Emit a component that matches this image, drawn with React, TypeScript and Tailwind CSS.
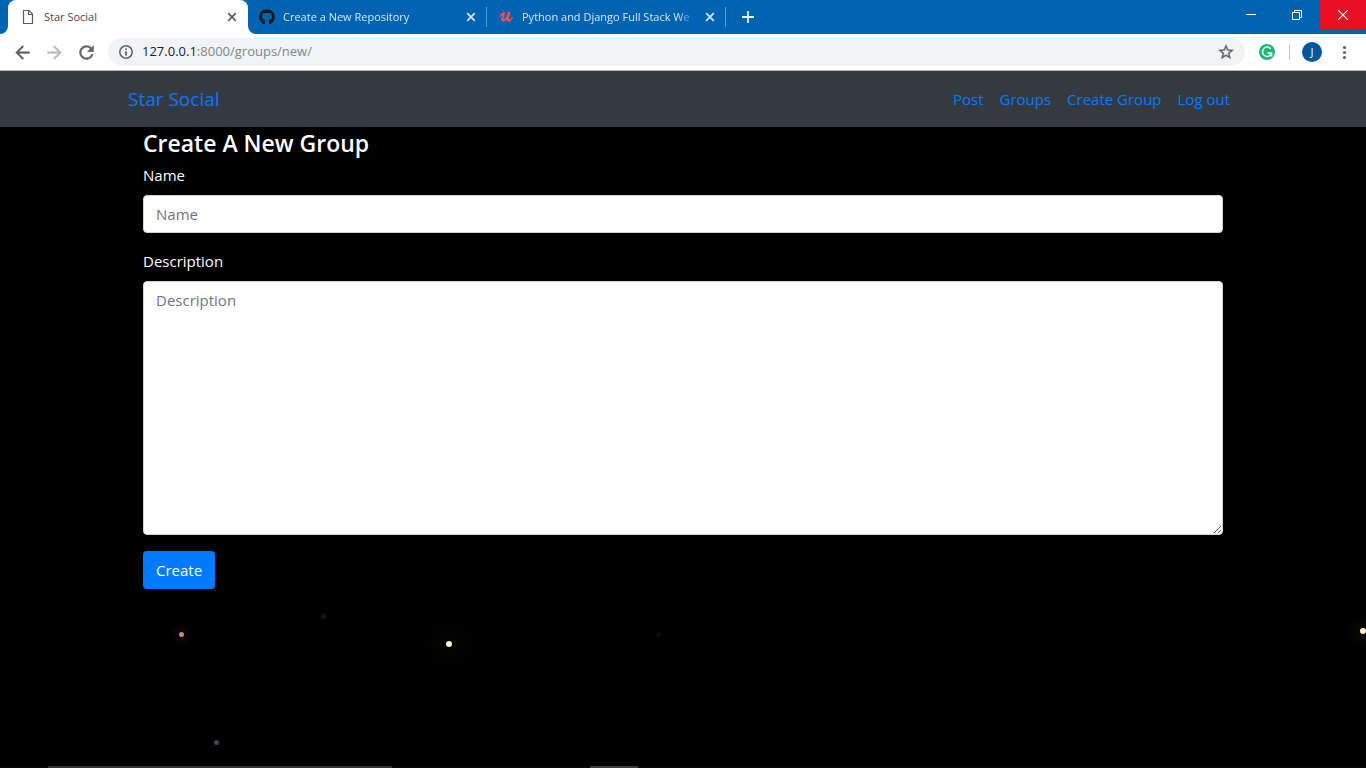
import type { ReactNode } from "react";
import { FaGithub } from "react-icons/fa";

function CloseGlyph() {
  return (
    <svg viewBox="0 0 10 10" className="size-[10px]" fill="none" stroke="currentColor" strokeWidth="1.7">
      <path d="M1.200 1.200 8.800 8.800M8.800 1.200 1.200 8.800" />
    </svg>
  );
}

function ToolbarGlyph({ d }: { d: string }) {
  return (
    <svg viewBox="0 0 24 24" className="size-[21px]" fill="currentColor" stroke="currentColor" strokeWidth="0.5">
      <path d={d} />
    </svg>
  );
}

const glyphs = {
  back: "M20 11H7.830l5.590-5.590L12 4l-8 8 8 8 1.410-1.410L7.830 13H20v-2z",
  forward: "M12 4l-1.410 1.410L16.170 11H4v2h12.170l-5.580 5.590L12 20l8-8z",
  reload:
    "M17.650 6.350A7.958 7.958 0 0 0 12 4c-4.420 0-7.990 3.580-7.990 8s3.570 8 7.990 8c3.730 0 6.840-2.550 7.730-6h-2.080A5.990 5.990 0 0 1 12 18c-3.310 0-6-2.690-6-6s2.690-6 6-6c1.660 0 3.140.690 4.220 1.780L13 11h7V4l-2.350 2.350z",
};

function InfoGlyph() {
  return (
    <svg viewBox="0 0 16 16" className="size-4" fill="none" stroke="currentColor">
      <circle cx="8" cy="8" r="6.200" strokeWidth="1.500" />
      <path strokeWidth="1.800" d="M8 7.200V11.500M8 4.400V6" />
    </svg>
  );
}

function StarGlyph() {
  return (
    <svg viewBox="0 0 24 24" className="size-[18px]" fill="currentColor" stroke="currentColor" strokeWidth="0.500">
      <path d="M22 9.240l-7.190-.620L12 2 9.190 8.630 2 9.240l5.460 4.730L5.820 21 12 17.270 18.180 21l-1.630-7.030L22 9.240zM12 15.400l-3.760 2.270 1-4.280-3.320-2.880 4.380-.380L12 6.100l1.710 4.040 4.380.380-3.320 2.880 1 4.280L12 15.400z" />
    </svg>
  );
}

function MenuGlyph() {
  return (
    <svg viewBox="0 0 20 20" className="size-5" fill="currentColor">
      <circle cx="10.500" cy="5.500" r="1.600" />
      <circle cx="10.500" cy="10.500" r="1.600" />
      <circle cx="10.500" cy="15.500" r="1.600" />
    </svg>
  );
}

function UdemyMark() {
  return (
    <svg viewBox="0 0 16 16" className="size-4 shrink-0" fill="none" stroke="#eb5252" strokeLinecap="round" strokeLinejoin="round">
      <path strokeWidth="2.300" d="M6 4 4.600 8.800C3.800 12 6 12.400 7.600 10.400 9 8.600 10.200 6.400 11.200 3.800M11.200 3.800 9.900 8.600C9.200 11.600 10.600 12.400 12 11" />
      <path strokeWidth="1.300" d="M1.800 7.200C2.800 5.400 4.200 4 6 4M12 11 14.300 8.800" />
    </svg>
  );
}

function FileGlyph() {
  return (
    <svg viewBox="0 0 16 16" className="size-4 shrink-0" fill="none" stroke="#5a5d61" strokeWidth="1.200">
      <path d="M3.500 1.500H9L12.500 5V14.500H3.500ZM8.500 1.500V5.500H12.500" />
    </svg>
  );
}

function GrammarlyMark() {
  return (
    <svg viewBox="0 0 16 16" className="size-4" fill="none">
      <circle cx="8" cy="8" r="8" fill="#1cb775" />
      <path d="M11.800 4.800A4.700 4.700 0 1 0 12.200 10.200" stroke="#fff" strokeWidth="1.500" />
      <path d="M8.400 9H12.600V12.600" stroke="#fff" strokeWidth="1.500" />
    </svg>
  );
}

function InactiveTab({ icon, title }: { icon: ReactNode; title: string }) {
  return (
    <div className="relative flex h-[34px] min-w-0 flex-[0_1_239px] items-center gap-2 px-[11px] text-[#d9e8f5]">
      {icon}
      <a
        href="#"
        className="min-w-0 flex-1 overflow-hidden whitespace-nowrap [mask-image:linear-gradient(to_right,black_88%,transparent)]"
      >
        {title}
      </a>
      <button aria-label="Close tab">
        <CloseGlyph />
      </button>
      <span className="absolute right-0 top-[7px] h-5 w-px bg-[#5c9bd0]" />
    </div>
  );
}

function BrowserChrome() {
  return (
    <header>
      <div className="flex h-[34px] items-start bg-[#0063b1] text-[11px]">
        <span className="h-full w-2 bg-white">
          <span className="block h-full rounded-br-lg bg-[#0063b1]" />
        </span>
        <div className="flex h-[34px] min-w-0 flex-[0_1_240px] items-center gap-2 rounded-t-lg bg-white pl-3 pr-[11px] text-[#45494d]">
          <FileGlyph />
          <a href="#" className="min-w-0 flex-1 truncate">
            Star Social
          </a>
          <button aria-label="Close tab" className="text-[#5a5d61]">
            <CloseGlyph />
          </button>
        </div>
        <span className="h-full bg-white">
          <span className="block h-full w-2 rounded-bl-lg bg-[#0063b1]" />
        </span>
        <div className="-ml-2 flex min-w-0 flex-1">
          <InactiveTab icon={<FaGithub className="size-4 shrink-0 text-[#191717]" />} title="Create a New Repository" />
          <InactiveTab icon={<UdemyMark />} title="Python and Django Full Stack We" />
          <button aria-label="New tab" className="ml-4 text-[#e6f0f8]">
            <svg viewBox="0 0 12 12" className="size-3" fill="none" stroke="currentColor" strokeWidth="1.800">
              <path d="M6 0V12M0 6H12" />
            </svg>
          </button>
        </div>
        <div className="flex h-[29px] text-white">
          <button aria-label="Minimize" className="flex w-[46px] items-center justify-center">
            <svg viewBox="0 0 10 10" className="size-[10px]" stroke="currentColor">
              <path d="M0 4.500H10" />
            </svg>
          </button>
          <button aria-label="Restore" className="flex w-[46px] items-center justify-center">
            <svg viewBox="0 0 10 10" className="size-[10px]" fill="none" stroke="currentColor">
              <path d="M.5 2.500H7.500V9.500H.5ZM2.500 2.500V.5H9.500V7.500H7.500" />
            </svg>
          </button>
          <button aria-label="Close" className="flex w-[46px] items-center justify-center bg-[#e81123]">
            <svg viewBox="0 0 10 10" className="size-[10px]" stroke="currentColor" strokeWidth="1.100">
              <path d="M0 0 10 10M10 0 0 10" />
            </svg>
          </button>
        </div>
      </div>
      <div className="flex h-[37px] items-center border-b border-[#b6b4b6] bg-white px-3 text-[#5f6368]">
        <button aria-label="Back" className="mr-[11px]">
          <ToolbarGlyph d={glyphs.back} />
        </button>
        <button aria-label="Forward" className="mr-[11px] text-[#babcbe]">
          <ToolbarGlyph d={glyphs.forward} />
        </button>
        <button aria-label="Reload">
          <ToolbarGlyph d={glyphs.reload} />
        </button>
        <div className="ml-[11px] flex h-7 min-w-0 flex-1 items-center rounded-full bg-[#f1f3f4] px-[10px]">
          <InfoGlyph />
          <a href="#" className="ml-2 flex-1 text-[13px] text-[#80868b]">
            <span className="text-[#202124]">127.0.0.1</span>:8000/groups/new/
          </a>
          <button aria-label="Bookmark this page">
            <StarGlyph />
          </button>
        </div>
        <button aria-label="Grammarly" className="ml-[14px]">
          <GrammarlyMark />
        </button>
        <span className="ml-[14px] h-4 w-px bg-[#c4c6c8]" />
        <button
          aria-label="Profile"
          className="ml-3 flex size-5 items-center justify-center rounded-full bg-[#01579b] text-[11px] text-white"
        >
          J
        </button>
        <button aria-label="Menu" className="ml-3">
          <MenuGlyph />
        </button>
      </div>
    </header>
  );
}

const navLinks = ["Post", "Groups", "Create Group", "Log out"];

function SiteNav() {
  return (
    <nav className="bg-[#343a40] text-[#007bff]">
      <div className="mx-auto flex h-14 max-w-[1140px] items-center justify-between px-[15px]">
        <a href="#" className="text-[19px] text-[#1074ff]">
          Star Social
        </a>
        <ul className="flex text-[15px]">
          {navLinks.map((label) => (
            <li key={label}>
              <a href="#" className="block px-2 py-2">
                {label}
              </a>
            </li>
          ))}
        </ul>
      </div>
    </nav>
  );
}

function Fireflies() {
  return (
    <div aria-hidden="true">
      <i className="absolute left-[179px] top-[632px] size-[5px] rounded-full bg-[#c08b87] shadow-[0_0_8px_2px_#2b1c1c]" />
      <i className="absolute left-[321px] top-[614px] size-[5px] rounded-full bg-[#161314]" />
      <i className="absolute left-[446px] top-[641px] size-[6px] rounded-full bg-[#fff0cc] shadow-[0_0_16px_12px_#050502]" />
      <i className="absolute left-[656px] top-[632px] size-[5px] rounded-full bg-[#0b0b0e]" />
      <i className="absolute right-0 top-[628px] size-[6px] rounded-full bg-[#fff0cc] shadow-[0_0_16px_5px_#13110d]" />
      <i className="absolute left-[214px] top-[740px] size-[5px] rounded-full bg-[#553661]" />
    </div>
  );
}

export default function App() {
  return (
    <div className="relative flex min-h-screen flex-col overflow-hidden bg-black font-['Open_Sans','Noto_Sans',sans-serif]">
      <Fireflies />
      <BrowserChrome />
      <SiteNav />
      <main className="mx-auto w-full max-w-[1140px] flex-1 px-[30px] text-[15px] text-white">
        <h1 className="mb-1 text-[23px] font-semibold leading-8">Create A New Group</h1>
        <form onSubmit={(e) => e.preventDefault()}>
          <label htmlFor="name" className="mb-2 block leading-6">
            Name
          </label>
          <input
            id="name"
            placeholder="Name"
            className="mb-4 block h-[38px] w-full rounded border border-[#ced4da] bg-white px-3 text-[#495057] placeholder:text-[#6c757d]"
          />
          <label htmlFor="description" className="mb-2 block leading-6">
            Description
          </label>
          <textarea
            id="description"
            rows={10}
            placeholder="Description"
            className="mb-4 block w-full resize-y rounded border border-[#ced4da] bg-white px-3 py-[6px] leading-6 text-[#495057] placeholder:text-[#757575]"
          />
          <button className="h-[38px] rounded bg-[#007bff] px-[13px]">Create</button>
        </form>
      </main>
      <footer className="flex h-[2px] bg-[#070707]">
        <span className="ml-12 h-full w-[344px] bg-[#333333]" />
        <span className="ml-[198px] h-full w-12 bg-[#3a3a3a]" />
      </footer>
    </div>
  );
}
